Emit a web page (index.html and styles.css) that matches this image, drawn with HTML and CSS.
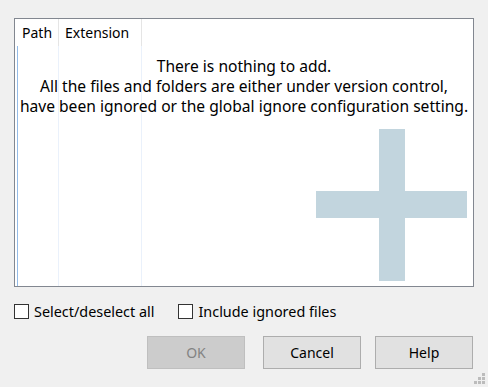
FILE: index.html
```html
<!DOCTYPE html>
<html>
<head>
<meta charset="utf-8">
<link rel="stylesheet" href="styles.css">
</head>
<body>
<div class="dialog">
  <div class="listbox">
    <div class="header">
      <div class="col col-path">Path</div>
      <div class="col col-ext">Extension</div>
      <div class="col col-rest"></div>
    </div>
    <div class="body">
      <div class="bcol bcol-path"></div>
      <div class="bcol bcol-ext"></div>
      <div class="bcol bcol-rest"></div>
      <div class="message">There is nothing to add.<br>All the files and folders are either under version control,<br>have been ignored or the global ignore configuration setting.</div>
    </div>
    <div class="watermark">
      <div class="wm-v"></div>
      <div class="wm-h"></div>
    </div>
  </div>
  <div class="checks">
    <label class="check"><span class="box"></span>Select/deselect all</label>
    <label class="check"><span class="box"></span>Include ignored files</label>
  </div>
  <div class="buttons">
    <div class="btn btn-disabled">OK</div>
    <div class="btn btn-cancel">Cancel</div>
    <div class="btn btn-help">Help</div>
  </div>
  <svg class="grip" width="12" height="12" viewBox="0 0 12 12">
    <rect x="8" y="0" width="3" height="3" fill="#bcbcbc"/>
    <rect x="4" y="4" width="3" height="3" fill="#bcbcbc"/>
    <rect x="8" y="4" width="3" height="3" fill="#bcbcbc"/>
    <rect x="0" y="8" width="3" height="3" fill="#bcbcbc"/>
    <rect x="4" y="8" width="3" height="3" fill="#bcbcbc"/>
    <rect x="8" y="8" width="3" height="3" fill="#bcbcbc"/>
  </svg>
</div>
</body>
</html>
```

FILE: styles.css
```css
html, body {
  margin: 0;
  padding: 0;
  background: #f0f0f0;
}
body {
  width: 488px;
  height: 387px;
  overflow: hidden;
  font-family: "Noto Sans", "Open Sans", sans-serif;
  font-size: 14px;
  color: #000;
}
.dialog {
  position: relative;
  width: 488px;
  height: 387px;
  padding: 18px 14px 0 14px;
  box-sizing: border-box;
  display: flex;
  flex-direction: column;
}
.listbox {
  position: relative;
  width: 460px;
  height: 269px;
  box-sizing: border-box;
  border: 1px solid #828790;
  background: #fff;
  display: flex;
  flex-direction: column;
  overflow: hidden;
}
.header {
  display: flex;
  height: 27px;
  flex: none;
}
.col {
  box-sizing: border-box;
  border-right: 1px solid #e5e5e5;
  padding-left: 7px;
  line-height: 27px;
  height: 27px;
}
.col-path { width: 44px; }
.col-ext { width: 83px; padding-left: 6px; }
.col-rest { flex: 1; border-right: none; }
.body {
  position: relative;
  flex: 1;
  display: flex;
}
.bcol {
  box-sizing: border-box;
  border-right: 1px solid #eaf1fb;
}
.bcol-path {
  border-left: 1px solid #93bbe7;
  margin-left: 2px;
  width: 42px;
}
.bcol-ext { width: 83px; }
.bcol-rest { flex: 1; border-right: none; }
.message {
  position: absolute;
  left: 0;
  right: 0;
  top: 10px;
  text-align: center;
  font-size: 15.6px;
  line-height: 20px;
}
.watermark {
  position: absolute;
  right: 6px;
  bottom: 5px;
  width: 151px;
  height: 152px;
  filter: blur(0.6px);
}
.wm-v {
  position: absolute;
  left: 63px;
  top: 0;
  width: 26px;
  height: 152px;
  background: #c2d5de;
}
.wm-h {
  position: absolute;
  left: 0;
  top: 62px;
  width: 151px;
  height: 27px;
  background: #c2d5de;
}
.checks {
  display: flex;
  margin-top: 17px;
  height: 15px;
  align-items: center;
  font-size: 14.4px;
}
.check {
  display: flex;
  align-items: center;
  margin-right: 24px;
  white-space: nowrap;
}
.box {
  width: 15px;
  height: 15px;
  box-sizing: border-box;
  border: 1px solid #333;
  background: #fff;
  margin-right: 5px;
}
.buttons {
  display: flex;
  margin-top: 17px;
  padding-left: 133px;
}
.btn {
  width: 98px;
  height: 33px;
  box-sizing: border-box;
  border: 1px solid #adadad;
  background: #e1e1e1;
  display: flex;
  align-items: center;
  justify-content: center;
}
.btn-disabled {
  background: #cccccc;
  border-color: #bfbfbf;
  color: #838383;
}
.btn-cancel { margin-left: 18px; }
.btn-help { margin-left: 14px; }
.grip {
  position: absolute;
  right: 2px;
  bottom: 2px;
}
```
